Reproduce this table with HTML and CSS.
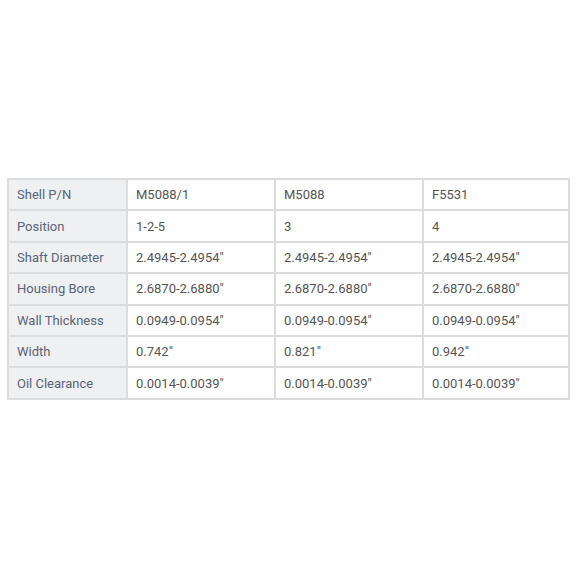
FILE: index.html
```html
<!DOCTYPE html>
<html>
<head>
<meta charset="utf-8">
<link rel="stylesheet" href="styles.css">
</head>
<body>
<div class="page">
<table class="spec">
<colgroup><col class="c1"><col class="c2"><col class="c3"><col class="c4"></colgroup>
<tr><th>Shell P/N</th><td>M5088/1</td><td>M5088</td><td>F5531</td></tr>
<tr><th>Position</th><td>1-2-5</td><td>3</td><td>4</td></tr>
<tr><th>Shaft Diameter</th><td>2.4945-2.4954"</td><td>2.4945-2.4954"</td><td>2.4945-2.4954"</td></tr>
<tr><th>Housing Bore</th><td>2.6870-2.6880"</td><td>2.6870-2.6880"</td><td>2.6870-2.6880"</td></tr>
<tr><th>Wall Thickness</th><td>0.0949-0.0954"</td><td>0.0949-0.0954"</td><td>0.0949-0.0954"</td></tr>
<tr><th>Width</th><td>0.742"</td><td>0.821"</td><td>0.942"</td></tr>
<tr><th>Oil Clearance</th><td>0.0014-0.0039"</td><td>0.0014-0.0039"</td><td>0.0014-0.0039"</td></tr>
</table>
</div>
</body>
</html>
```
FILE: styles.css
```css
html, body {
  margin: 0;
  padding: 0;
  background: #ffffff;
}
.page {
  width: 576px;
  height: 576px;
  padding: 178px 0 0 7px;
  box-sizing: border-box;
}
.spec {
  border-collapse: collapse;
  table-layout: fixed;
  width: 561px;
  font-family: Roboto, "Liberation Sans", sans-serif;
  font-size: 13px;
}
.c1 { width: 119px; }
.c2 { width: 148px; }
.c3 { width: 148px; }
.c4 { width: 146px; }
.spec th, .spec td {
  border: 2px solid #dcdcdc;
  height: 31.4px;
  box-sizing: border-box;
  padding: 0 0 0 8px;
  text-align: left;
  font-weight: normal;
  vertical-align: middle;
  white-space: nowrap;
}
.spec th {
  background: #eef0f2;
  color: #5a6378;
}
.spec td {
  background: #ffffff;
  color: #555555;
}
```
